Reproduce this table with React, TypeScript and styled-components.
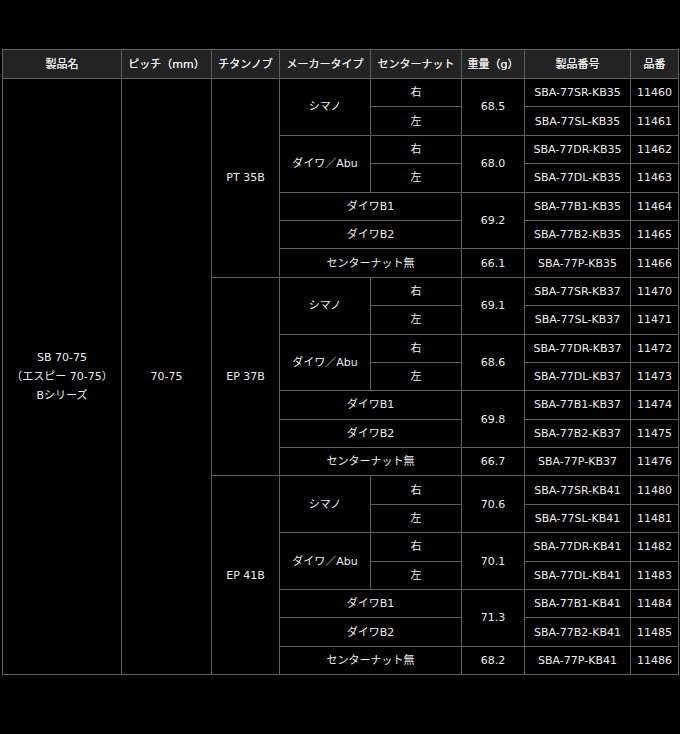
import React from "react";
import styled, { createGlobalStyle } from "styled-components";

const GlobalStyle = createGlobalStyle`
  html, body {
    margin: 0;
    padding: 0;
    background: #000;
  }
`;

interface Group {
  knob: string;
  series: string;
  weights: [string, string, string, string];
  base: number;
}

const groups: Group[] = [
  { knob: "PT 35B", series: "KB35", weights: ["68.5", "68.0", "69.2", "66.1"], base: 11460 },
  { knob: "EP 37B", series: "KB37", weights: ["69.1", "68.6", "69.8", "66.7"], base: 11470 },
  { knob: "EP 41B", series: "KB41", weights: ["70.6", "70.1", "71.3", "68.2"], base: 11480 },
];

const headers = ["製品名", "ピッチ（mm）", "チタンノブ", "メーカータイプ", "センターナット", "重量（g）", "製品番号", "品番"];
const widths = [119, 90, 68, 91, 91, 63, 106, 48];

const App: React.FC = () => {
  return (
    <>
      <GlobalStyle />
      <Page>
        <Table>
          <colgroup>
            {widths.map((w, i) => (
              <col key={i} style={{ width: w }} />
            ))}
          </colgroup>
          <thead>
            <tr>
              {headers.map(h => (
                <HeadCell key={h}>{h}</HeadCell>
              ))}
            </tr>
          </thead>
          <tbody>
            {groups.map((g, gi) => {
              const code = (s: string) => `SBA-77${s}-${g.series}`;
              return (
                <React.Fragment key={g.knob}>
                  <tr>
                    {gi === 0 && (
                      <>
                        <Cell rowSpan={21}>
                          SB 70-75
                          <br />
                          （エスピー 70-75）
                          <br />
                          Bシリーズ
                        </Cell>
                        <Cell rowSpan={21}>70-75</Cell>
                      </>
                    )}
                    <Cell rowSpan={7}>{g.knob}</Cell>
                    <Cell rowSpan={2}>シマノ</Cell>
                    <Cell>右</Cell>
                    <Cell rowSpan={2}>{g.weights[0]}</Cell>
                    <Cell>{code("SR")}</Cell>
                    <Cell>{g.base}</Cell>
                  </tr>
                  <tr>
                    <Cell>左</Cell>
                    <Cell>{code("SL")}</Cell>
                    <Cell>{g.base + 1}</Cell>
                  </tr>
                  <tr>
                    <Cell rowSpan={2}>ダイワ／Abu</Cell>
                    <Cell>右</Cell>
                    <Cell rowSpan={2}>{g.weights[1]}</Cell>
                    <Cell>{code("DR")}</Cell>
                    <Cell>{g.base + 2}</Cell>
                  </tr>
                  <tr>
                    <Cell>左</Cell>
                    <Cell>{code("DL")}</Cell>
                    <Cell>{g.base + 3}</Cell>
                  </tr>
                  <tr>
                    <Cell colSpan={2}>ダイワB1</Cell>
                    <Cell rowSpan={2}>{g.weights[2]}</Cell>
                    <Cell>{code("B1")}</Cell>
                    <Cell>{g.base + 4}</Cell>
                  </tr>
                  <tr>
                    <Cell colSpan={2}>ダイワB2</Cell>
                    <Cell>{code("B2")}</Cell>
                    <Cell>{g.base + 5}</Cell>
                  </tr>
                  <tr>
                    <Cell colSpan={2}>センターナット無</Cell>
                    <Cell>{g.weights[3]}</Cell>
                    <Cell>{code("P")}</Cell>
                    <Cell>{g.base + 6}</Cell>
                  </tr>
                </React.Fragment>
              );
            })}
          </tbody>
        </Table>
      </Page>
    </>
  );
};

const Page = styled.div`
  padding: 49px 2px 60px 2px;
  background: #000;
  min-height: 734px;
  box-sizing: border-box;
`;

const Table = styled.table`
  width: 677px;
  table-layout: fixed;
  border-collapse: collapse;
  font-family: "DejaVu Sans", "Noto Sans CJK JP", sans-serif;
  font-size: 11px;
  color: #ececec;
  text-align: center;

  tbody tr {
    height: 28.4px;
  }
`;

const HeadCell = styled.th`
  background: #232323;
  border: 1px solid #5e5e5e;
  font-weight: normal;
  padding: 0;
  height: 28px;
  line-height: 1;
  text-shadow: 0 0 0.5px #fff;
`;

const Cell = styled.td`
  border: 1px solid #5e5e5e;
  padding: 0;
  line-height: 19px;
  vertical-align: middle;
`;

export default App;
